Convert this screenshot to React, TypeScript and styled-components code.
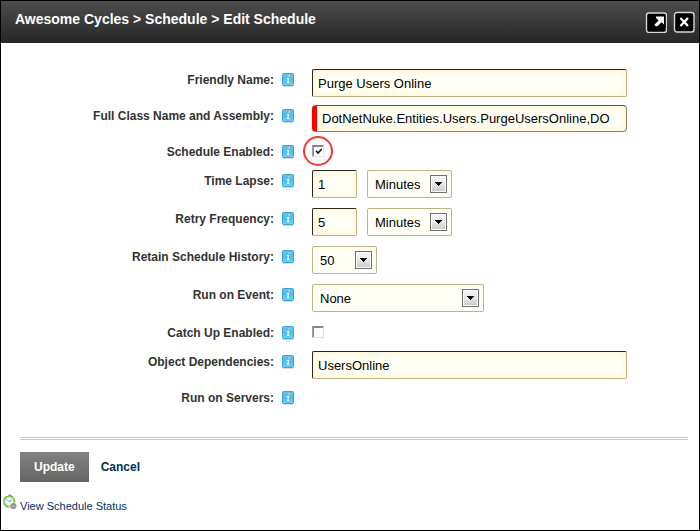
import React, { useState } from "react";
import styled, { createGlobalStyle } from "styled-components";

const GlobalStyle = createGlobalStyle`
  *, *::before, *::after { box-sizing: border-box; }
  body {
    margin: 0;
    background: #fff;
    font-family: Arial, "Liberation Sans", sans-serif;
    font-size: 12px;
    color: #333;
  }
  button, input, select { font-family: inherit; margin: 0; }
`;

const Dialog = styled.div`
  display: flex;
  flex-direction: column;
  min-height: 100vh;
  border: 1px solid #000;
`;

const TitleBar = styled.header`
  display: flex;
  justify-content: space-between;
  align-items: flex-start;
  height: 42px;
  padding: 10px 4px 0 14px;
  background: linear-gradient(#4d4d4d, #262626);
`;

const Title = styled.h1`
  margin: 0;
  font-size: 14px;
  line-height: 16px;
  font-weight: bold;
  color: #fff;
`;

const WindowButtons = styled.div`
  display: flex;
  gap: 6px;
`;

const IconButton = styled.button`
  display: block;
  width: 22px;
  height: 22px;
  padding: 0;
  border: 0;
  background: none;
  cursor: pointer;

  svg { display: block; }
`;

const Form = styled.form`
  display: flex;
  flex-direction: column;
`;

const Fields = styled.div`
  padding-top: 26px;
`;

const rowHeights = { text: "36px", check: "29px", select: "38px" };

const Row = styled.div<{ $kind: keyof typeof rowHeights }>`
  display: grid;
  grid-template-columns: 273px 12px minmax(0, 1fr);
  column-gap: 8px;
  align-items: start;
  min-height: ${(p) => rowHeights[p.$kind]};
  padding-right: 12px;
`;

const Label = styled.label`
  padding-top: 4px;
  line-height: 15px;
  font-weight: bold;
  text-align: right;
`;

const HelpButton = styled.button`
  display: block;
  width: 12px;
  height: 14px;
  margin-top: 4px;
  padding: 0;
  border: 0;
  background: none;
  cursor: help;

  svg { display: block; }
`;

const Controls = styled.div`
  display: flex;
  gap: 10px;
  padding-left: 10px;
`;

const TextInput = styled.input<{ $short?: boolean; $required?: boolean }>`
  width: 100%;
  max-width: ${(p) => (p.$short ? "45px" : "315px")};
  height: 28px;
  padding: 0 5px;
  border: 1px solid;
  border-color: #2a2618 #bdb583 #bdb583 #2a2618;
  border-radius: 2px;
  background: #fffff5;
  box-shadow: inset 0 0 7px 1px #fff3cc;
  font-size: 13px;
  color: #000;
  outline: 0;
  ${(p) =>
    p.$required &&
    `
    height: 27px;
    border-color: #5c5842 #8a8460 #8a8460 #f00;
    border-left: 5px solid #f00;
    border-radius: 4px;
  `}
`;

const SelectBox = styled.div<{ $width: string }>`
  position: relative;
  width: ${(p) => p.$width};

  svg {
    position: absolute;
    top: 5px;
    right: 5px;
    pointer-events: none;
  }
`;

const Select = styled.select`
  appearance: none;
  display: block;
  width: 100%;
  height: 28px;
  padding: 0 24px 0 7px;
  border: 1px solid #bdb583;
  border-radius: 2px;
  background: #fffff5;
  font-size: 13px;
  color: #000;
  outline: 0;
`;

const CheckBox = styled.span`
  position: relative;
  display: block;
  width: 12px;
  height: 12px;
  margin-top: 4px;
`;

const CheckInput = styled.input`
  appearance: none;
  display: block;
  width: 12px;
  height: 12px;
  border: 1px solid;
  border-color: #8a8a8a #e0e0e8 #e0e0e8 #a0a0b0;
  background: #fff;
  box-shadow: inset 1px 1px 0 #85858f;
`;

const CheckMark = styled.svg`
  position: absolute;
  top: 0;
  left: 0;
  pointer-events: none;
`;

const Highlight = styled.span`
  position: absolute;
  top: -9px;
  left: -9px;
  width: 30px;
  height: 30px;
  border: 2px solid #f23a3a;
  border-radius: 50%;
  pointer-events: none;
`;

const Actions = styled.div`
  display: flex;
  align-items: center;
  gap: 12px;
  margin: 14px 11px 0 19px;
  padding-top: 12px;
  border-top: 3px double #c8c8c8;
`;

const PrimaryButton = styled.button`
  height: 30px;
  padding: 0 14px;
  border: 0;
  background: linear-gradient(#818181, #656565);
  font-size: 12px;
  font-weight: bold;
  color: #fff;
`;

const CancelLink = styled.a`
  font-weight: bold;
  color: #002f56;
  text-decoration: none;
`;

const StatusLink = styled.a`
  display: flex;
  align-self: flex-start;
  gap: 3px;
  margin: 12px 0 0 1px;
  font-size: 11px;
  line-height: 14px;
  color: #003366;
  text-decoration: none;

  span { padding-top: 5px; }
`;

function InfoIcon() {
  return (
    <svg width="12" height="14" viewBox="0 0 12 14" aria-hidden="true">
      <defs>
        <linearGradient id="info" x1="0" y1="0" x2="0" y2="1">
          <stop offset="0" stopColor="#6cc0ea" />
          <stop offset="0.5" stopColor="#4fbdec" />
          <stop offset="1" stopColor="#6cd2fa" />
        </linearGradient>
      </defs>
      <rect x="1" y="12" width="10" height="2" fill="#dcdcdc" />
      <rect x="0.5" y="0.5" width="11" height="12" rx="1" fill="url(#info)" stroke="#3aa3d8" />
      <path d="M6.4 3h1.4M4.8 5.6h1.8l-.9 3.8h1.5" fill="none" stroke="#f2fbff" strokeWidth="1.2" />
    </svg>
  );
}

function DropArrow() {
  return (
    <svg width="17" height="18" viewBox="0 0 17 18" aria-hidden="true">
      <defs>
        <linearGradient id="drop" x1="0" y1="0" x2="0" y2="1">
          <stop offset="0" stopColor="#f4f4f4" />
          <stop offset="0.5" stopColor="#e8e8e8" />
          <stop offset="1" stopColor="#cccccc" />
        </linearGradient>
      </defs>
      <rect x="0.5" y="0.5" width="16" height="17" fill="#fafafa" stroke="#707070" />
      <rect x="2" y="2" width="13" height="14" fill="url(#drop)" />
      <path d="M5 7h7v1h-1v1h-1v1h-1v1h-1v-1h-1v-1h-1v-1h-1z" fill="#000" />
    </svg>
  );
}

function ExpandIcon() {
  return (
    <svg width="22" height="22" viewBox="0 0 22 22" aria-hidden="true">
      <rect x="1.5" y="2" width="20" height="19.5" rx="2.5" fill="#000" stroke="#d6d6d6" strokeWidth="1.4" />
      <path d="M11 5.5h8v8l-2.3-2.3-4.4 4.1h-1.6l-1.4-1.6 4.3-4.2-2.6-2.4z" fill="#fff" />
    </svg>
  );
}

function CloseIcon() {
  return (
    <svg width="22" height="22" viewBox="0 0 22 22" aria-hidden="true">
      <rect x="1.5" y="1.5" width="19.5" height="19.5" rx="2.5" fill="#000" stroke="#d6d6d6" strokeWidth="1.4" />
      <path d="M7.5 7l7.5 8M15 7l-7.5 8" stroke="#fff" strokeWidth="2.2" />
    </svg>
  );
}

function StatusIcon() {
  return (
    <svg width="15" height="16" viewBox="0 0 15 16" aria-hidden="true">
      <path d="M1 7.5Q1.5 2.5 6 1.8L7.5 0l4 2.8L9 5z" fill="#55c51f" />
      <path d="M10.5 2.5q3.2 2.4 2.8 6.5l-3-1zM1 6.5l1 5 4.5 3-.5-4z" fill="#6ccb3a" />
      <circle cx="7.2" cy="7.4" r="4.6" fill="#f3f4f3" stroke="#a9b5a5" />
      <path d="M5 5.5l2.2 2.2L9.8 6" fill="none" stroke="#8c8c8c" />
      <path d="M5 12.5q4 .3 6-3l1 4-2 1.5z" fill="#c4c8c2" />
      <circle cx="11.5" cy="12" r="3" fill="#959595" />
      <path d="M9.5 12h4" stroke="#b9b9b9" />
    </svg>
  );
}

type FieldProps = {
  id: string;
  label: string;
  kind: keyof typeof rowHeights;
  children?: React.ReactNode;
};

function Field({ id, label, kind, children }: FieldProps) {
  return (
    <Row $kind={kind}>
      <Label htmlFor={id}>{label}</Label>
      <HelpButton type="button" aria-label={`Help: ${label}`}>
        <InfoIcon />
      </HelpButton>
      <Controls>{children}</Controls>
    </Row>
  );
}

type DropDownProps = { id?: string; name?: string; width: string; options: string[] };

function DropDown({ id, name, width, options }: DropDownProps) {
  return (
    <SelectBox $width={width}>
      <Select id={id} aria-label={name}>
        {options.map((option) => (
          <option key={option}>{option}</option>
        ))}
      </Select>
      <DropArrow />
    </SelectBox>
  );
}

function Check({ id, initial, highlighted }: { id: string; initial?: boolean; highlighted?: boolean }) {
  const [checked, setChecked] = useState(Boolean(initial));
  return (
    <CheckBox>
      <CheckInput id={id} type="checkbox" checked={checked} onChange={(e) => setChecked(e.target.checked)} />
      {checked && (
        <CheckMark width="12" height="12" viewBox="0 0 12 12" aria-hidden="true">
          <path d="M4 5.8l2 2.2 3.8-4" fill="none" stroke="#111" strokeWidth="1.6" />
        </CheckMark>
      )}
      {highlighted && <Highlight />}
    </CheckBox>
  );
}

const units = ["Minutes", "Seconds", "Hours", "Days"];

export default function App() {
  return (
    <>
      <GlobalStyle />
      <Dialog>
        <TitleBar>
          <Title>Awesome Cycles &gt; Schedule &gt; Edit Schedule</Title>
          <WindowButtons>
            <IconButton type="button" aria-label="Expand"><ExpandIcon /></IconButton>
            <IconButton type="button" aria-label="Close"><CloseIcon /></IconButton>
          </WindowButtons>
        </TitleBar>
        <Form onSubmit={(e) => e.preventDefault()}>
          <Fields>
            <Field id="name" label="Friendly Name:" kind="text">
              <TextInput id="name" defaultValue="Purge Users Online" />
            </Field>
            <Field id="assembly" label="Full Class Name and Assembly:" kind="text">
              <TextInput id="assembly" $required defaultValue="DotNetNuke.Entities.Users.PurgeUsersOnline,DO" />
            </Field>
            <Field id="enabled" label="Schedule Enabled:" kind="check">
              <Check id="enabled" initial highlighted />
            </Field>
            <Field id="lapse" label="Time Lapse:" kind="select">
              <TextInput id="lapse" $short defaultValue="1" />
              <DropDown name="Time lapse unit" width="85px" options={units} />
            </Field>
            <Field id="retry" label="Retry Frequency:" kind="select">
              <TextInput id="retry" $short defaultValue="5" />
              <DropDown name="Retry frequency unit" width="85px" options={units} />
            </Field>
            <Field id="history" label="Retain Schedule History:" kind="select">
              <DropDown id="history" width="65px" options={["50", "100", "250"]} />
            </Field>
            <Field id="event" label="Run on Event:" kind="select">
              <DropDown id="event" width="172px" options={["None", "APPLICATION_START"]} />
            </Field>
            <Field id="catchup" label="Catch Up Enabled:" kind="check">
              <Check id="catchup" />
            </Field>
            <Field id="deps" label="Object Dependencies:" kind="text">
              <TextInput id="deps" defaultValue="UsersOnline" />
            </Field>
            <Field id="servers" label="Run on Servers:" kind="text" />
          </Fields>
          <Actions>
            <PrimaryButton type="submit">Update</PrimaryButton>
            <CancelLink href="#cancel">Cancel</CancelLink>
          </Actions>
          <StatusLink href="#status">
            <StatusIcon />
            <span>View Schedule Status</span>
          </StatusLink>
        </Form>
      </Dialog>
    </>
  );
}
